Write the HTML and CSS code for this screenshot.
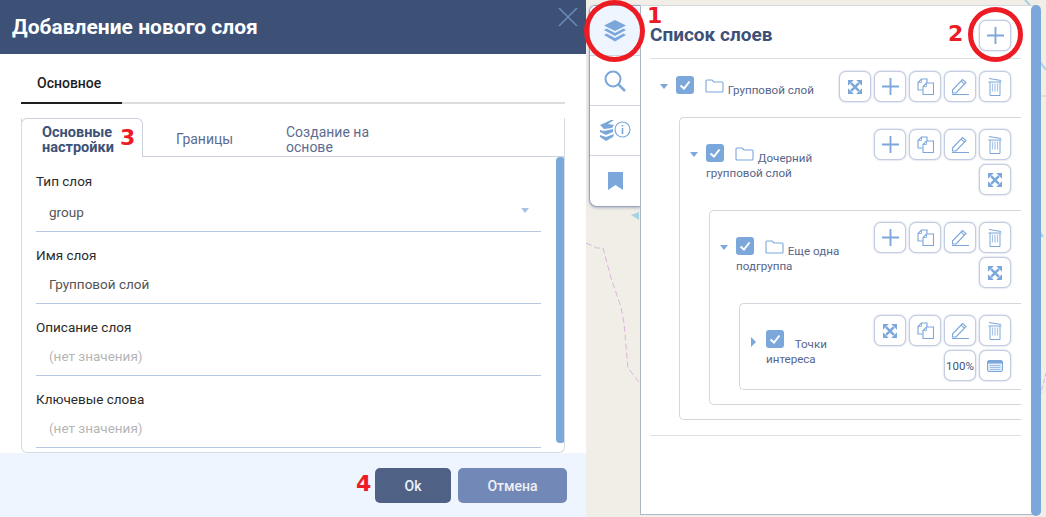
FILE: index.html
```html
<!DOCTYPE html>
<html>
<head>
  <title>Добавление нового слоя</title>
  <link rel="stylesheet" href="styles.css">
</head>
<body>
<svg class="defs" width="0" height="0">
  <symbol id="i-expand" viewBox="0 0 18 18">
    <path d="M4 4 14 14M14 4 4 14" stroke="#7ba7db" stroke-width="3.200" fill="none"/>
    <path d="M0 0h7.500L0 7.500zM18 0v7.500L10.500 0zM0 18v-7.500L7.500 18zM18 18h-7.500L18 10.500z" fill="#7ba7db"/>
  </symbol>
  <symbol id="i-plus" viewBox="0 0 20 20">
    <path d="M10 0v20M0 10h20" stroke="#7ba7db" stroke-width="2.200" fill="none"/>
  </symbol>
  <symbol id="i-copy" viewBox="0 0 17 17">
    <path d="M5.500 12H1V4.500L4.500 1H10V5" stroke="#7ba7db" stroke-width="1.100" fill="none"/>
    <path d="M6 16.500V8.500L9.500 5H16.500V16.500z" stroke="#7ba7db" stroke-width="1.100" fill="none"/>
    <path d="M4.500 1V4.500H1M9.500 5V8.500H6" stroke="#7ba7db" stroke-width="0.800" fill="none"/>
  </symbol>
  <symbol id="i-edit" viewBox="0 0 18 17">
    <path d="M1.500 12 11.500 1.500 15 4.500 5 15H1.500zM10 3.200l3.500 3" stroke="#7ba7db" stroke-width="1.100" fill="none"/>
    <path d="M1 16.500H18" stroke="#7ba7db" stroke-width="1"/>
  </symbol>
  <symbol id="i-trash" viewBox="0 0 14 18">
    <path d="M1 0.500l12 2" stroke="#7ba7db" stroke-width="1"/>
    <path d="M0.500 4h13M2 4v13.500h10V4" stroke="#7ba7db" stroke-width="1" fill="none"/>
    <path d="M4.500 5.500v8M7 5.500v8M9.500 5.500v8" stroke="#a9c6e9" stroke-width="1.200"/>
  </symbol>
  <symbol id="i-table" viewBox="0 0 16 12">
    <rect x="0.500" y="0.500" width="15" height="11" rx="1.500" fill="#e3edfa" stroke="#7ba7db"/>
    <path d="M1 1h14v2.500H1z" fill="#7ba7db"/>
    <path d="M2.500 5.500h11M2.500 7.500h11M2.500 9.500h11" stroke="#8fb4e0" stroke-width="0.800"/>
  </symbol>
  <symbol id="i-folder" viewBox="0 0 19 14">
    <path d="M1 3V2q0-1 1-1h5l2 2h8q1 0 1 1v8q0 1-1 1H2q-1 0-1-1z" stroke="#7ba7db" stroke-width="1.100" fill="none"/>
  </symbol>
  <symbol id="i-check" viewBox="0 0 18 18">
    <rect width="18" height="18" rx="3" fill="#7ba7db"/>
    <path d="M4.500 9.500 8 12.500 13.500 5.500" stroke="#fff" stroke-width="2" fill="none"/>
  </symbol>
</svg>

<div class="page">
  <div class="dialog">
    <div class="dialog-head">
      <h1 class="dialog-title">Добавление нового слоя</h1>
      <svg class="dialog-close" width="20" height="18" viewBox="0 0 20 18"><path d="M1 0l18 18M19 0 1 18" stroke="#6d8ab5" stroke-width="1.500"/></svg>
    </div>
    <div class="dialog-body">
      <div class="main-tabs">
        <div class="main-tab">Основное</div>
      </div>
      <div class="tab-panel">
        <div class="sub-tabs">
          <div class="sub-tab sub-tab-active">Основные<br>настройки</div>
          <div class="sub-tab sub-tab-borders">Границы</div>
          <div class="sub-tab sub-tab-based">Создание на<br>основе</div>
        </div>
        <div class="form">
          <div class="form-scroll"></div>
          <div class="field field-first">
            <div class="field-label">Тип слоя</div>
            <div class="field-value">group<span class="select-arrow"></span></div>
          </div>
          <div class="field">
            <div class="field-label">Имя слоя</div>
            <div class="field-value">Групповой слой</div>
          </div>
          <div class="field">
            <div class="field-label">Описание слоя</div>
            <div class="field-value field-empty">(нет значения)</div>
          </div>
          <div class="field">
            <div class="field-label">Ключевые слова</div>
            <div class="field-value field-empty">(нет значения)</div>
          </div>
        </div>
      </div>
    </div>
    <div class="dialog-foot">
      <button class="btn btn-ok">Ok</button>
      <button class="btn btn-cancel">Отмена</button>
    </div>
  </div>

  <div class="map">
    <svg class="map-lines" width="460" height="517" viewBox="0 0 460 517">
      <path d="M0 243 7 246 10 248 17 248 25 278 35 307 38 323 42 368 53 382" stroke="#dcb4dc" stroke-width="1" stroke-dasharray="6 3" fill="none"/>
      <path d="M45 215 53 212V220z" fill="#a6d3e0"/>
      <path d="M439 0 444 5M454 62 460 70" stroke="#a6d3e0" stroke-width="2" fill="none"/>
      <path d="M454 96H460" stroke="#f0c4b8"/>
      <path d="M454 230 458 237H454z" fill="#a6d3e0"/>
      <path d="M454 397 460 373" stroke="#dcb4dc" stroke-dasharray="5 2"/>
    </svg>

    <div class="sidebar">
      <div class="side-tab side-tab-active">
        <svg width="24" height="22" viewBox="0 0 24 22"><path d="M12 0 23 5.500 12 11 1 5.500z" fill="#7ba7db"/><path d="M3.500 8.500 12 13l8.500-4.500L23 10 12 16 1 10z" fill="#7ba7db"/><path d="M3.500 13.500 12 18l8.500-4.500L23 15 12 21.500 1 15z" fill="#7ba7db"/></svg>
      </div>
      <div class="side-tab">
        <svg width="22" height="22" viewBox="0 0 22 22"><circle cx="9" cy="9" r="7.500" fill="none" stroke="#7ba7db" stroke-width="2"/><path d="M14.500 14.500 21 21" stroke="#7ba7db" stroke-width="2.500"/></svg>
      </div>
      <div class="side-tab">
        <svg width="32" height="21" viewBox="0 0 32 21"><path d="M1 5 12 0h3L9 4l6 1-2 3-8 1zM1 10l4 1 9-2v3l-7 3-6-3zM1 15l6 2 8-3-1 3-7 4-6-4z" fill="#7ba7db"/><circle cx="23.500" cy="9.500" r="7.500" fill="#fff" stroke="#7ba7db" stroke-width="1.200"/><path d="M23.500 8v6" stroke="#7ba7db" stroke-width="1.600"/><path d="M23.500 5v1.600" stroke="#7ba7db" stroke-width="1.600"/></svg>
      </div>
      <div class="side-tab side-tab-last">
        <svg width="15" height="18" viewBox="0 0 15 18"><path d="M0 0h15v18L7.500 13 0 18z" fill="#7ba7db"/></svg>
      </div>
    </div>

    <div class="panel">
      <div class="panel-scroll"></div>
      <div class="panel-head">
        <h2 class="panel-title">Список слоев</h2>
        <button class="tool"><svg width="17" height="17"><use href="#i-plus"/></svg></button>
      </div>

      <div class="tree">
        <div class="layer-row">
          <span class="caret"></span>
          <div class="layer-name">
            <svg class="layer-check" width="18" height="18"><use href="#i-check"/></svg>
            <svg class="layer-folder" width="19" height="14"><use href="#i-folder"/></svg>
            Групповой слой
          </div>
          <div class="tools tools-wide">
            <button class="tool"><svg width="14" height="14"><use href="#i-expand"/></svg></button>
            <button class="tool"><svg width="17" height="17"><use href="#i-plus"/></svg></button>
            <button class="tool"><svg width="17" height="17"><use href="#i-copy"/></svg></button>
            <button class="tool"><svg width="18" height="17"><use href="#i-edit"/></svg></button>
            <button class="tool"><svg width="14" height="18"><use href="#i-trash"/></svg></button>
          </div>
        </div>

        <div class="layer-box">
          <div class="layer-row">
            <span class="caret"></span>
            <div class="layer-name">
              <svg class="layer-check" width="18" height="18"><use href="#i-check"/></svg>
              <svg class="layer-folder" width="19" height="14"><use href="#i-folder"/></svg>
              Дочерний групповой слой
            </div>
            <div class="tools">
              <button class="tool"><svg width="17" height="17"><use href="#i-plus"/></svg></button>
              <button class="tool"><svg width="17" height="17"><use href="#i-copy"/></svg></button>
              <button class="tool"><svg width="18" height="17"><use href="#i-edit"/></svg></button>
              <button class="tool"><svg width="14" height="18"><use href="#i-trash"/></svg></button>
              <button class="tool"><svg width="14" height="14"><use href="#i-expand"/></svg></button>
            </div>
          </div>

          <div class="layer-box">
            <div class="layer-row">
              <span class="caret"></span>
              <div class="layer-name">
                <svg class="layer-check" width="18" height="18"><use href="#i-check"/></svg>
                <svg class="layer-folder" width="19" height="14"><use href="#i-folder"/></svg>
                Еще одна подгруппа
              </div>
              <div class="tools">
                <button class="tool"><svg width="17" height="17"><use href="#i-plus"/></svg></button>
                <button class="tool"><svg width="17" height="17"><use href="#i-copy"/></svg></button>
                <button class="tool"><svg width="18" height="17"><use href="#i-edit"/></svg></button>
                <button class="tool"><svg width="14" height="18"><use href="#i-trash"/></svg></button>
                <button class="tool"><svg width="14" height="14"><use href="#i-expand"/></svg></button>
              </div>
            </div>

            <div class="layer-box layer-box-leaf">
              <div class="layer-row">
                <span class="caret caret-closed"></span>
                <div class="layer-name">
                  <svg class="layer-check" width="18" height="18"><use href="#i-check"/></svg>
                  Точки интереса
                </div>
                <div class="tools">
                  <button class="tool"><svg width="14" height="14"><use href="#i-expand"/></svg></button>
                  <button class="tool"><svg width="17" height="17"><use href="#i-copy"/></svg></button>
                  <button class="tool"><svg width="18" height="17"><use href="#i-edit"/></svg></button>
                  <button class="tool"><svg width="14" height="18"><use href="#i-trash"/></svg></button>
                  <button class="tool tool-text">100%</button>
                  <button class="tool"><svg width="16" height="12"><use href="#i-table"/></svg></button>
                </div>
              </div>
            </div>
          </div>
        </div>
        <div class="tree-end"></div>
      </div>
    </div>
  </div>

  <!-- красные пометки поверх скриншота -->
  <div class="ring ring-layers"></div>
  <div class="ring ring-add"></div>
  <span class="mark mark-1">1</span>
  <span class="mark mark-2">2</span>
  <span class="mark mark-3">3</span>
  <span class="mark mark-4">4</span>
</div>
</body>
</html>
```

FILE: styles.css
```css
* {
  box-sizing: border-box;
}
body {
  margin: 0;
  padding: 0;
  font-family: Roboto, "Liberation Sans", sans-serif;
  background: #f1eee8;
}
h1, h2 {
  margin: 0;
}
button {
  font-family: inherit;
}
.defs {
  position: absolute;
}
.page {
  position: relative;
  display: flex;
  width: 1046px;
  height: 517px;
  overflow: hidden;
}

/* dialog */
.dialog {
  width: 586px;
  height: 517px;
  display: flex;
  flex-direction: column;
  background: #fff;
}
.dialog-head {
  height: 54px;
  flex: none;
  display: flex;
  align-items: center;
  justify-content: space-between;
  padding: 0 8px 0 12px;
  background: #3d5177;
}
.dialog-title {
  font-size: 21px;
  font-weight: 700;
  color: #fff;
  padding-bottom: 1px;
}
.dialog-close {
  margin-bottom: 21px;
}
.dialog-body {
  flex: 1;
  padding: 0 21px;
}
.main-tabs {
  height: 50px;
  border-bottom: 2px solid #dcdcdc;
}
.main-tab {
  width: 101px;
  height: 50px;
  padding: 20px 0 0 16px;
  font-size: 14px;
  font-weight: 500;
  line-height: 18px;
  color: #1e1e1e;
  border-bottom: 2px solid #1e1e1e;
}
.tab-panel {
  margin-top: 14px;
  height: 335px;
  border: 1px solid #d6dbe4;
  border-top: 0;
  border-radius: 0 0 6px 6px;
  overflow: hidden;
}
.sub-tabs {
  height: 39px;
  display: flex;
  margin-left: -1px;
  border-bottom: 1px solid #ccd2dc;
  font-size: 14px;
  line-height: 15px;
  color: #5c6c8f;
}
.sub-tab {
  display: flex;
  align-items: center;
  padding-top: 5px;
}
.sub-tab-active {
  width: 122px;
  height: 39px;
  padding: 4px 0 0 20px;
  font-size: 14.5px;
  font-weight: 700;
  color: #3d5177;
  background: #fff;
  border: 1px solid #ccd2dc;
  border-bottom: 0;
  border-radius: 6px 6px 0 0;
}
.sub-tab-borders {
  margin-left: 33px;
  width: 110px;
}
.sub-tab-based {
  width: 90px;
}
.form {
  position: relative;
  padding: 3px 0 0 14px;
  width: 520px;
}
.form-scroll {
  position: absolute;
  top: 0;
  left: 534px;
  width: 9px;
  height: 286px;
  background: #7ba7db;
  border-radius: 4px;
}
.field {
  width: 505px;
  height: 72px;
  padding-top: 13px;
}
.field-first {
  padding-top: 11px;
}
.field-first .field-label {
  margin-bottom: 2px;
}
.field-label {
  font-size: 13.5px;
  line-height: 20px;
  color: #2b2b2b;
}
.field-value {
  height: 39px;
  padding: 10px 13px 0;
  font-size: 13.5px;
  line-height: 18px;
  color: #555;
  border-bottom: 1px solid #b4c8e0;
  position: relative;
}
.field-empty {
  color: #b5b5b5;
}
.select-arrow {
  position: absolute;
  right: 12px;
  top: 15px;
  border: 4px solid transparent;
  border-top: 5px solid #a9c3e4;
  border-bottom: 0;
}
.dialog-foot {
  height: 64px;
  flex: none;
  display: flex;
  justify-content: flex-end;
  gap: 7px;
  padding: 15px 19px 0 0;
  background: #eff5fe;
}
.btn {
  height: 35px;
  border: 0;
  border-radius: 5px;
  font-size: 14px;
  font-weight: 500;
  color: #eef1f7;
}
.btn-ok {
  width: 76px;
  background: #4f6285;
}
.btn-cancel {
  width: 109px;
  background: #7289b8;
}

/* map and layers panel */
.map {
  position: relative;
  flex: 1;
  display: flex;
  align-items: flex-start;
  padding: 5px 0 0 3px;
  background: #f1eee8;
}
.map-lines {
  position: absolute;
  top: 0;
  left: 0;
}
.sidebar {
  position: relative;
  width: 51px;
  height: 202px;
  flex: none;
  background: #fff;
  border: 1px solid #9aa4bc;
  border-right: 0;
  border-radius: 6px 0 0 8px;
  box-shadow: 0 1px 3px #aab2c6;
  overflow: hidden;
}
.side-tab {
  height: 50px;
  display: flex;
  align-items: center;
  justify-content: center;
  border-bottom: 1px solid #cfd4dd;
}
.side-tab-active {
  background: #eff5fe;
}
.side-tab-last {
  border-bottom: 0;
}
.panel {
  position: relative;
  width: 401px;
  height: 510px;
  flex: none;
  padding: 14px 0 0 9px;
  background: #fff;
  border-left: 1px solid #aeb6c8;
  border-top: 1px solid #d5d8df;
  border-bottom: 1px solid #aeb6c8;
  border-radius: 0 5px 5px 0;
}
.panel-scroll {
  position: absolute;
  top: -1px;
  right: 0;
  width: 10px;
  height: 511px;
  background: #7ba7db;
  border-radius: 5px;
}
.panel-head {
  width: 371px;
  height: 39px;
  display: flex;
  justify-content: space-between;
  padding-right: 10px;
  border-bottom: 1px solid #dcdfe5;
}
.panel-title {
  font-size: 19px;
  font-weight: 700;
  line-height: 20px;
  padding-top: 5px;
  color: #3d5177;
}
.tree {
  width: 371px;
  padding-top: 12px;
}
.tree-end {
  margin-top: 15px;
  border-top: 1px solid #dcdfe5;
}
.layer-box {
  margin-left: 29px;
  padding: 11px 0 14px;
  border: 1px solid #d3d6dc;
  border-right: 0;
  border-radius: 5px 0 0 5px;
}
.layer-box-leaf {
  padding-bottom: 8px;
}
.layer-box-leaf .layer-row {
  margin-bottom: 0;
}
.layer-row {
  display: flex;
  padding: 0 10px;
  margin-bottom: 15px;
}
.caret {
  flex: none;
  width: 16px;
  height: 0;
  margin-top: 13px;
  position: relative;
}
.caret::before {
  content: "";
  position: absolute;
  left: 0;
  top: 0;
  border: 4px solid transparent;
  border-top: 5px solid #7ba7db;
  border-bottom: 0;
}
.caret-closed::before {
  top: -1px;
  left: 1px;
  border: 5px solid transparent;
  border-left: 5px solid #7ba7db;
  border-right: 0;
}
.layer-name {
  flex: 1;
  min-width: 0;
  padding: 5px 10px 0 0;
  font-size: 11.6px;
  line-height: 15px;
  color: #56658a;
}
.layer-box .caret {
  margin-top: 23px;
}
.layer-box .layer-name {
  padding-top: 15px;
}
.layer-check {
  margin-right: 8px;
}
.layer-folder {
  vertical-align: 1px;
  margin-right: 1px;
}
.tools {
  flex: none;
  width: 137px;
  display: flex;
  flex-wrap: wrap;
  justify-content: flex-end;
  gap: 4px 3px;
}
.tools-wide {
  width: 172px;
}
.tool {
  width: 32px;
  height: 31px;
  flex: none;
  display: flex;
  align-items: center;
  justify-content: center;
  padding: 0;
  background: #fff;
  border: 1px solid #c3cce0;
  border-radius: 7px;
  box-shadow: 0 0 2px #aeb9d2;
}
.tool-text {
  font-size: 11.500px;
  color: #3d5177;
}

/* annotations */
.ring {
  position: absolute;
  border: 5px solid #ed1c24;
  border-radius: 50%;
}
.ring-layers {
  left: 584px;
  top: 0;
  width: 61px;
  height: 62px;
}
.ring-add {
  left: 968px;
  top: 7px;
  width: 55px;
  height: 55px;
}
.mark {
  position: absolute;
  font-family: "DejaVu Sans", sans-serif;
  font-size: 22px;
  font-weight: 700;
  line-height: 16px;
  color: #ed1c24;
}
.mark-1 {
  left: 647px;
  top: 8px;
}
.mark-2 {
  left: 948px;
  top: 26px;
}
.mark-3 {
  left: 120px;
  top: 130px;
}
.mark-4 {
  left: 356px;
  top: 476px;
}
```
